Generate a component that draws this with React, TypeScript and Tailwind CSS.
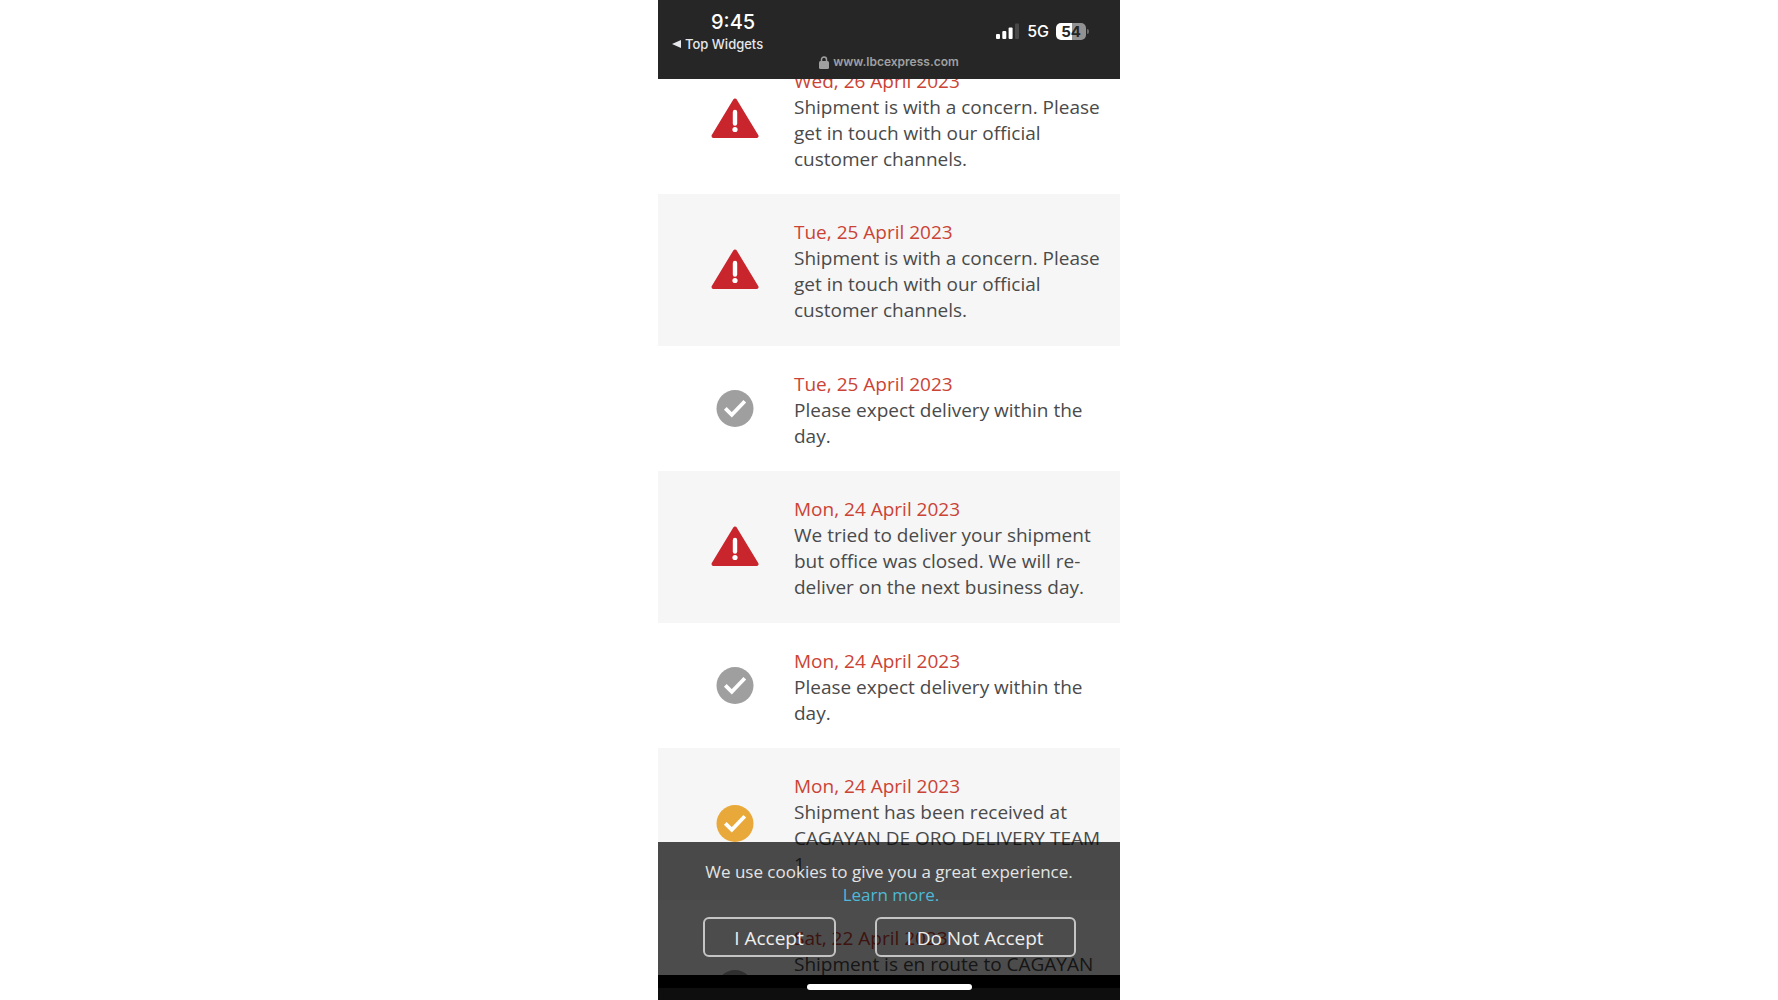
import React from "react";

type Status = "concern" | "done" | "current";

interface TrackingEvent {
  status: Status;
  date: string;
  lines: string[];
}

const events: TrackingEvent[] = [
  {
    status: "concern",
    date: "Wed, 26 April 2023",
    lines: ["Shipment is with a concern. Please", "get in touch with our official", "customer channels."],
  },
  {
    status: "concern",
    date: "Tue, 25 April 2023",
    lines: ["Shipment is with a concern. Please", "get in touch with our official", "customer channels."],
  },
  { status: "done", date: "Tue, 25 April 2023", lines: ["Please expect delivery within the", "day."] },
  {
    status: "concern",
    date: "Mon, 24 April 2023",
    lines: ["We tried to deliver your shipment", "but office was closed. We will re-", "deliver on the next business day."],
  },
  { status: "done", date: "Mon, 24 April 2023", lines: ["Please expect delivery within the", "day."] },
  {
    status: "current",
    date: "Mon, 24 April 2023",
    lines: ["Shipment has been received at", "CAGAYAN DE ORO DELIVERY TEAM", "1"],
  },
  { status: "done", date: "Sat, 22 April 2023", lines: ["Shipment is en route to CAGAYAN"] },
];

function WarningIcon() {
  return (
    <svg viewBox="0 0 48 40" className="h-10 w-12" role="img" aria-label="Concern">
      <path d="M24 2.500 45.500 38H2.500Z" fill="#c9252c" stroke="#c9252c" strokeWidth="4" strokeLinejoin="round" />
      <path d="M24 14v11.500" stroke="#fff" strokeWidth="4.4" strokeLinecap="round" />
      <circle cx="24" cy="31.500" r="2.600" fill="#fff" />
    </svg>
  );
}

function CheckIcon({ current }: { current: boolean }) {
  return (
    <svg
      viewBox="0 0 37 37"
      className={current ? "h-[37px] w-12 text-[#e9a93a]" : "h-[37px] w-12 text-[#9f9f9f]"}
      role="img"
      aria-label="Completed"
    >
      <circle cx="18.5" cy="18.5" r="18.5" fill="currentColor" />
      <path d="M8.8 18.300 15.300 24.800 28.300 11.200" fill="none" stroke="#fff" strokeWidth="3.8" />
    </svg>
  );
}

function EventRow({ event, last }: { event: TrackingEvent; last: boolean }) {
  return (
    <li
      className={`flex shrink-0 items-center gap-[35px] pt-[25px] pl-[53px] odd:pb-[22px] even:bg-[#f6f6f6] even:pb-[23px] ${last ? "min-h-[178px]" : ""}`}
    >
      <div className="shrink-0 pb-1">
        {event.status === "concern" ? <WarningIcon /> : <CheckIcon current={event.status === "current"} />}
      </div>
      <div className="self-start text-[19px] leading-[26px] whitespace-nowrap text-[#4a4a4a]">
        <time className="block text-[#cb4335]">{event.date}</time>
        <p>
          {event.lines.map((line, i) => (
            <React.Fragment key={i}>
              {i > 0 && <br />}
              {line}
            </React.Fragment>
          ))}
        </p>
      </div>
    </li>
  );
}

function StatusBar() {
  return (
    <header className="h-[79px] shrink-0 bg-[#262626] font-['Inter',sans-serif] text-white">
      <div className="flex items-start justify-between pr-[31px] pl-3.5">
        <div className="pt-2.5">
          <div className="pl-[39px] text-xl leading-6 font-medium">9:45</div>
          <a href="#widgets" className="flex items-center gap-1 text-[13px] leading-5 font-medium text-gray-200">
            <svg viewBox="0 0 9 8" className="h-2 w-[9px]" aria-hidden="true">
              <path d="M0 4 9 0v8Z" fill="currentColor" />
            </svg>
            Top Widgets
          </a>
        </div>
        <div className="flex items-center gap-[7px] pt-5">
          <svg viewBox="0 0 24 16" className="h-4 w-6" role="img" aria-label="Signal">
            <rect x="0" y="11" width="4" height="5" rx="1" fill="#fff" />
            <rect x="6.3" y="8" width="4" height="8" rx="1" fill="#fff" />
            <rect x="12.6" y="4.500" width="4" height="11.500" rx="1" fill="#fff" />
            <rect x="19" y="0.500" width="4" height="15.500" rx="1" fill="#484848" />
          </svg>
          <span className="text-base leading-[22px] font-medium">5G</span>
          <div className="flex items-center gap-px">
            <span className="h-[17px] w-[30px] rounded-[5px] bg-linear-to-r from-white from-55% to-[#929292] to-55% text-center text-[15px] leading-[17px] font-bold text-[#262626]">
              54
            </span>
            <span className="h-[5px] w-0.5 rounded-r bg-[#6b6b6b]" />
          </div>
        </div>
      </div>
      <div className="flex items-center justify-center gap-1 text-xs leading-4 font-semibold text-[#a0a0a0]">
        <svg viewBox="0 0 10 13" className="h-[13px] w-2.5" aria-hidden="true">
          <path d="M2.500 6V3.500a2.500 2.500 0 0 1 5 0V6" fill="none" stroke="currentColor" strokeWidth="1.500" />
          <rect y="5" width="10" height="8" rx="1.500" fill="currentColor" />
        </svg>
        www.lbcexpress.com
      </div>
    </header>
  );
}

function CookieBanner() {
  const button =
    "h-10 rounded-md border-2 border-[#c4c4c4] pt-0.5 text-center text-[19px] leading-none whitespace-nowrap text-[#eeeeee]";
  return (
    <section
      aria-label="Cookies"
      className="absolute inset-x-0 bottom-0 bg-black/70 pt-[18px] pb-[18px] text-center text-[17px] leading-[23px] text-[#e4e4e4]"
    >
      <p>We use cookies to give you a great experience.</p>
      <a href="#cookies" className="block pl-1 text-[#4fb9d8]">
        Learn more.
      </a>
      <div className="mt-[11px] flex justify-center gap-[39px]">
        <button type="button" className={`${button} w-[133px]`}>
          I Accept
        </button>
        <button type="button" className={`${button} w-[201px]`}>
          I Do Not Accept
        </button>
      </div>
    </section>
  );
}

export default function App() {
  return (
    <div className="flex h-screen justify-center bg-white font-['Open_Sans','Noto_Sans',sans-serif]">
      <div className="flex w-full max-w-[462px] flex-col">
        <StatusBar />
        <main className="relative min-h-0 flex-1 overflow-hidden">
          <ul className="-mt-9 flex flex-col">
            {events.map((event, i) => (
              <EventRow key={i} event={event} last={i === events.length - 1} />
            ))}
          </ul>
          <CookieBanner />
        </main>
        <footer className="flex h-[25px] shrink-0 justify-center border-b-[12px] border-[#0e0e0e] bg-black">
          <div className="mt-[9px] h-1.5 w-[165px] shrink-0 rounded-full bg-white" />
        </footer>
      </div>
    </div>
  );
}
